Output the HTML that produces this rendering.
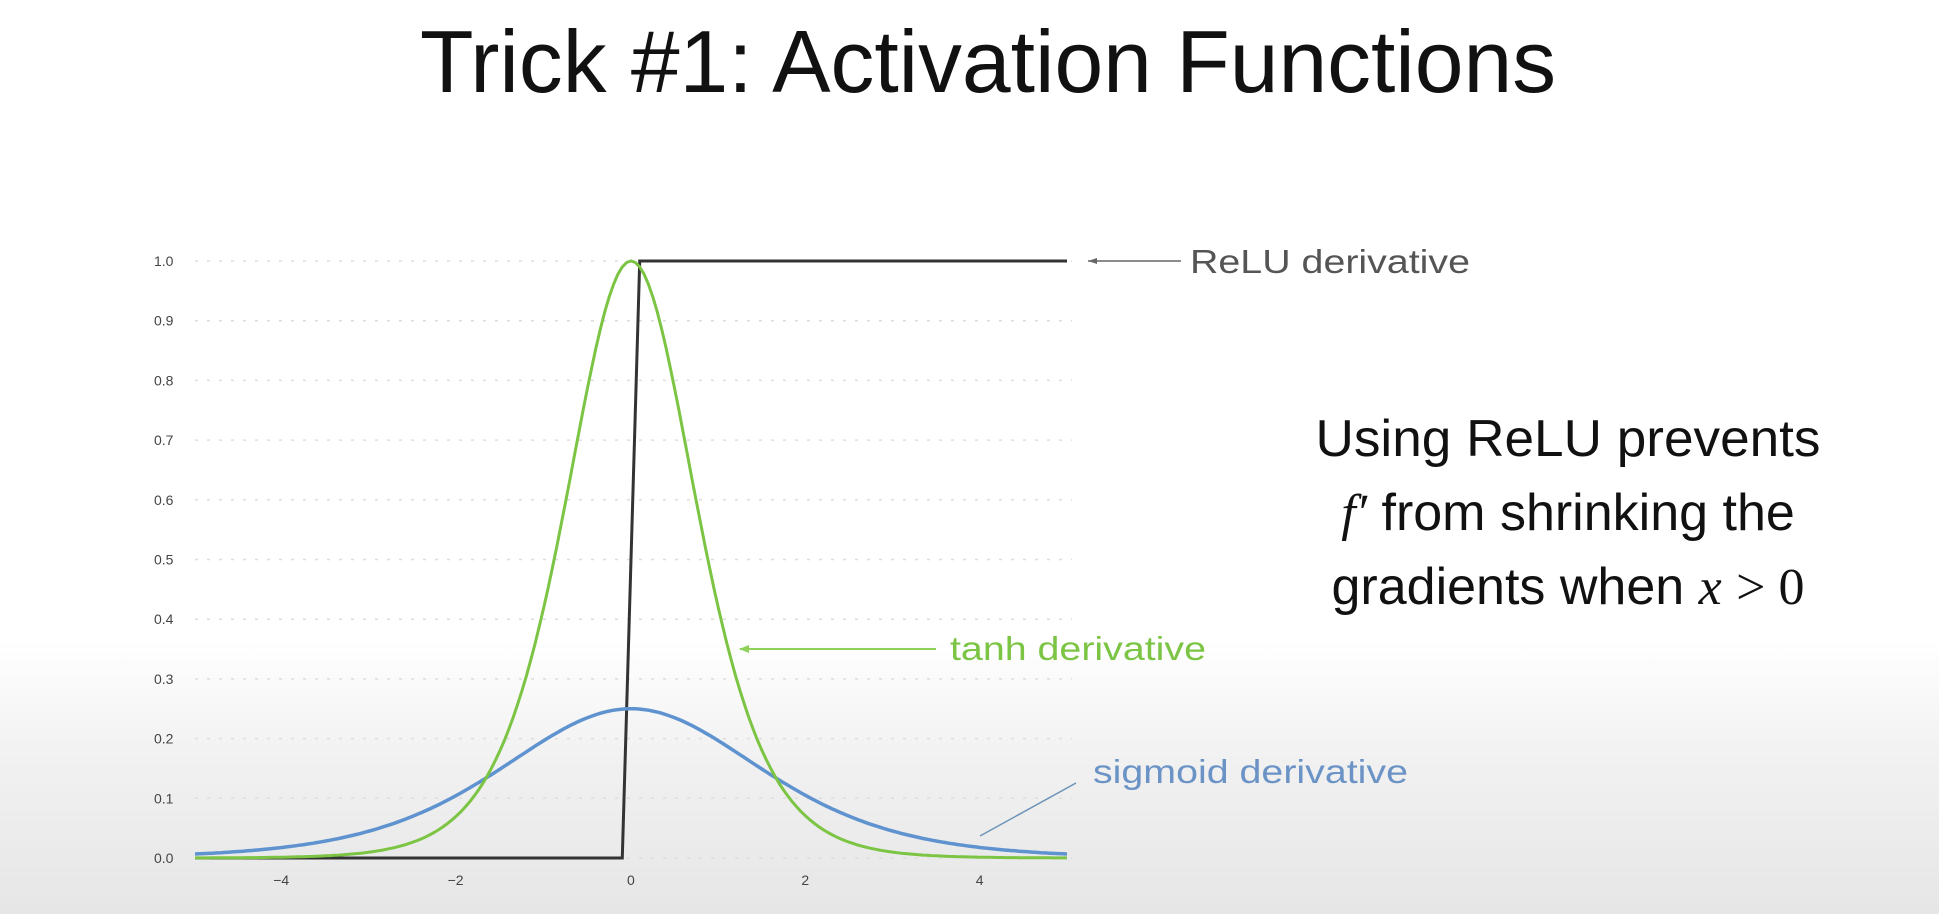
<!DOCTYPE html>
<html><head><meta charset="utf-8"><style>
html,body{margin:0;padding:0;}
body{width:1939px;height:914px;overflow:hidden;background:linear-gradient(#ffffff 0px,#ffffff 640px,#f1f1f1 760px,#e6e6e6 914px);font-family:"Liberation Sans",sans-serif;}
svg{position:absolute;left:0;top:0;}
</style></head><body>
<svg id="s" width="1939" height="914" xmlns="http://www.w3.org/2000/svg">
<text x="420" y="92" font-size="88" fill="#111" textLength="1136" lengthAdjust="spacingAndGlyphs">Trick #1: Activation Functions</text>
<g id="grid"></g>
<g id="labels" font-size="14" fill="#444"></g>
<path id="relu" fill="none" stroke="#333" stroke-width="3"/>
<path id="sig" fill="none" stroke="#5f93cf" stroke-width="3.5"/>
<path id="tanh" fill="none" stroke="#7cc444" stroke-width="3"/>
<line x1="1088" y1="261" x2="1181" y2="261" stroke="#666" stroke-width="1.5"/>
<path d="M1088 261 l9 -3 v6z" fill="#666"/>
<text x="1190" y="273" font-size="33" fill="#555" textLength="280" lengthAdjust="spacingAndGlyphs">ReLU derivative</text>
<line x1="740" y1="649" x2="936" y2="649" stroke="#8fd15a" stroke-width="2"/>
<path d="M739 649 l10 -4 v8z" fill="#8fd15a"/>
<text x="950" y="660" font-size="33" fill="#7cc444" textLength="256" lengthAdjust="spacingAndGlyphs">tanh derivative</text>
<line x1="980" y1="836" x2="1076" y2="783" stroke="#6b93b8" stroke-width="1.5"/>
<text x="1093" y="783" font-size="33" fill="#6b93c6" textLength="315" lengthAdjust="spacingAndGlyphs">sigmoid derivative</text>
<g font-size="52" fill="#111" text-anchor="middle">
<text x="1568" y="456" textLength="505" lengthAdjust="spacingAndGlyphs">Using ReLU prevents</text>
<text x="1568" y="530"><tspan font-family="Liberation Serif" font-style="italic">f′</tspan> from shrinking the</text>
<text x="1568" y="604">gradients when <tspan font-family="Liberation Serif" font-style="italic">x</tspan> <tspan font-family="Liberation Serif">&gt; 0</tspan></text>
</g>
</svg>
<script>
var X=function(x){return 631+x*87.2},Y=function(y){return 858-y*597};
var ns="http://www.w3.org/2000/svg",g=document.getElementById('grid'),L=document.getElementById('labels');
for(var i=0;i<=10;i++){var y=Y(i/10);var l=document.createElementNS(ns,'line');l.setAttribute('x1',195);l.setAttribute('x2',1072);l.setAttribute('y1',y);l.setAttribute('y2',y);l.setAttribute('stroke','#ddd');l.setAttribute('stroke-width','1.5');l.setAttribute('stroke-dasharray','3 9');g.appendChild(l);
var t=document.createElementNS(ns,'text');t.setAttribute('x',154);t.setAttribute('y',y+5);t.textContent=(i/10).toFixed(1);L.appendChild(t);}
[-4,-2,0,2,4].forEach(function(v){var t=document.createElementNS(ns,'text');t.setAttribute('x',X(v)-(v<0?9:4));t.setAttribute('y',885);t.textContent=v<0?'\u2212'+(-v):v;L.appendChild(t);});
function P(f){var d='';for(var x=-5;x<=5.0001;x+=0.05){d+=(d?'L':'M')+X(x).toFixed(1)+' '+Y(f(x)).toFixed(1);}return d;}
document.getElementById('tanh').setAttribute('d',P(function(x){var t=Math.tanh(x);return 1-t*t;}));
document.getElementById('sig').setAttribute('d',P(function(x){var s=1/(1+Math.exp(-x));return s*(1-s);}));
document.getElementById('relu').setAttribute('d','M'+X(-5)+' '+Y(0)+'L'+X(-0.1)+' '+Y(0)+'L'+X(0.1)+' '+Y(1)+'L'+X(5)+' '+Y(1));
</script>
</body></html>
